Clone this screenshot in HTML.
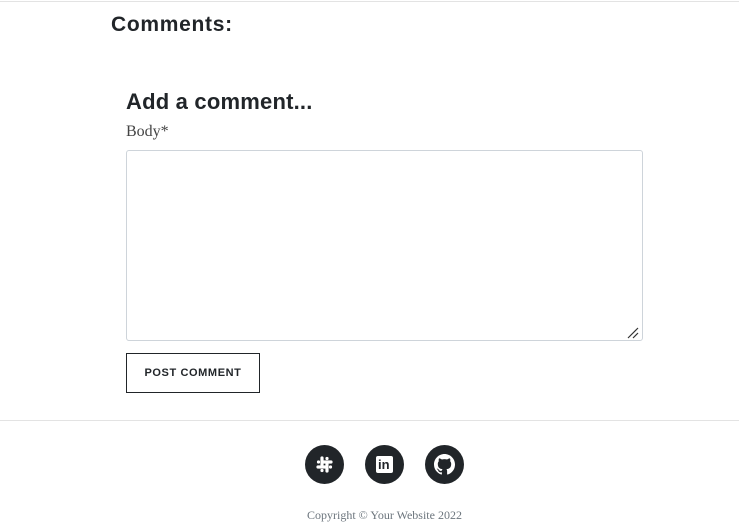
<!DOCTYPE html>
<html><head><style>
body{margin:0;width:739px;height:526px;background:#fff;position:relative;overflow:hidden;font-family:"Liberation Sans",sans-serif;color:#212529}
.a{position:absolute}
</style></head><body>
<div class="a" style="left:0;top:1px;width:739px;height:1px;background:#e3e3e3"></div>
<div class="a" style="left:111px;top:13px;font-size:21px;font-weight:bold;letter-spacing:0.7px">Comments:</div>
<div class="a" style="left:126px;top:89px;font-size:22px;font-weight:bold;letter-spacing:0.2px">Add a comment...</div>
<div class="a" style="left:126px;top:123px;font-family:'Liberation Serif',serif;font-size:16px;color:#444">Body*</div>
<div class="a" style="left:126px;top:150px;width:515px;height:189px;border:1px solid #ced4da;border-radius:3px"></div>
<svg class="a" style="left:627px;top:327px" width="12" height="12"><path d="M1 11L11 1M6 11L11 6" stroke="#333" stroke-width="1.2"/></svg>
<div class="a" style="left:126px;top:353px;width:132px;height:38px;border:1px solid #212529;font-size:11px;font-weight:bold;letter-spacing:0.6px;text-align:center;line-height:38px">POST COMMENT</div>
<div class="a" style="left:0;top:420px;width:739px;height:1px;background:#e3e3e3"></div>
<div class="a" style="left:305px;top:445px;width:39px;height:39px;border-radius:50%;background:#212529"></div>
<svg class="a" style="left:314px;top:454px" width="21" height="21" viewBox="0 0 21 21"><g stroke="#fff" stroke-width="3.2" stroke-linecap="round"><path d="M8 4v7M13 10v7M4 13h7M10 8h7"/></g><g fill="#fff"><circle cx="13" cy="4.5" r="1.6"/><circle cx="16.5" cy="13" r="1.6"/><circle cx="8" cy="16.5" r="1.6"/><circle cx="4.5" cy="8" r="1.6"/></g></svg>
<div class="a" style="left:365px;top:445px;width:39px;height:39px;border-radius:50%;background:#212529"></div>
<div class="a" style="left:376px;top:456px;width:17px;height:17px;background:#fff;border-radius:2px"></div>
<div class="a" style="left:378px;top:456px;font-size:13px;font-weight:bold;color:#212529;line-height:17px">in</div>
<div class="a" style="left:425px;top:445px;width:39px;height:39px;border-radius:50%;background:#212529"></div>
<svg class="a" style="left:434px;top:454px" width="21" height="21" viewBox="0 0 16 16"><path fill="#fff" d="M8 0C3.58 0 0 3.580 0 8c0 3.54 2.29 6.530 5.47 7.59.4.07.55-.17.55-.38v-1.33c-2.23.48-2.7-1.07-2.7-1.07-.36-.92-.89-1.170-.89-1.170-.73-.5.05-.49.05-.49.8.06 1.23.83 1.23.83.71 1.22 1.87.87 2.33.66.07-.52.28-.87.5-1.07-1.780-.2-3.64-.89-3.64-3.95 0-.87.31-1.590.82-2.15-.08-.2-.36-1.020.08-2.12 0 0 .67-.21 2.2.82a7.6 7.6 0 014 0c1.53-1.04 2.2-.82 2.2-.82.44 1.1.16 1.92.08 2.12.51.56.82 1.27.82 2.15 0 3.07-1.87 3.75-3.65 3.95.29.25.54.73.54 1.48v2.2c0 .21.15.46.55.38A8 8 0 0016 8c0-4.42-3.58-8-8-8z"/></svg>
<div class="a" style="left:0;top:508px;width:769px;text-align:center;font-family:'Liberation Serif',serif;font-size:12px;color:#6c757d">Copyright © Your Website 2022</div>
</body></html>
